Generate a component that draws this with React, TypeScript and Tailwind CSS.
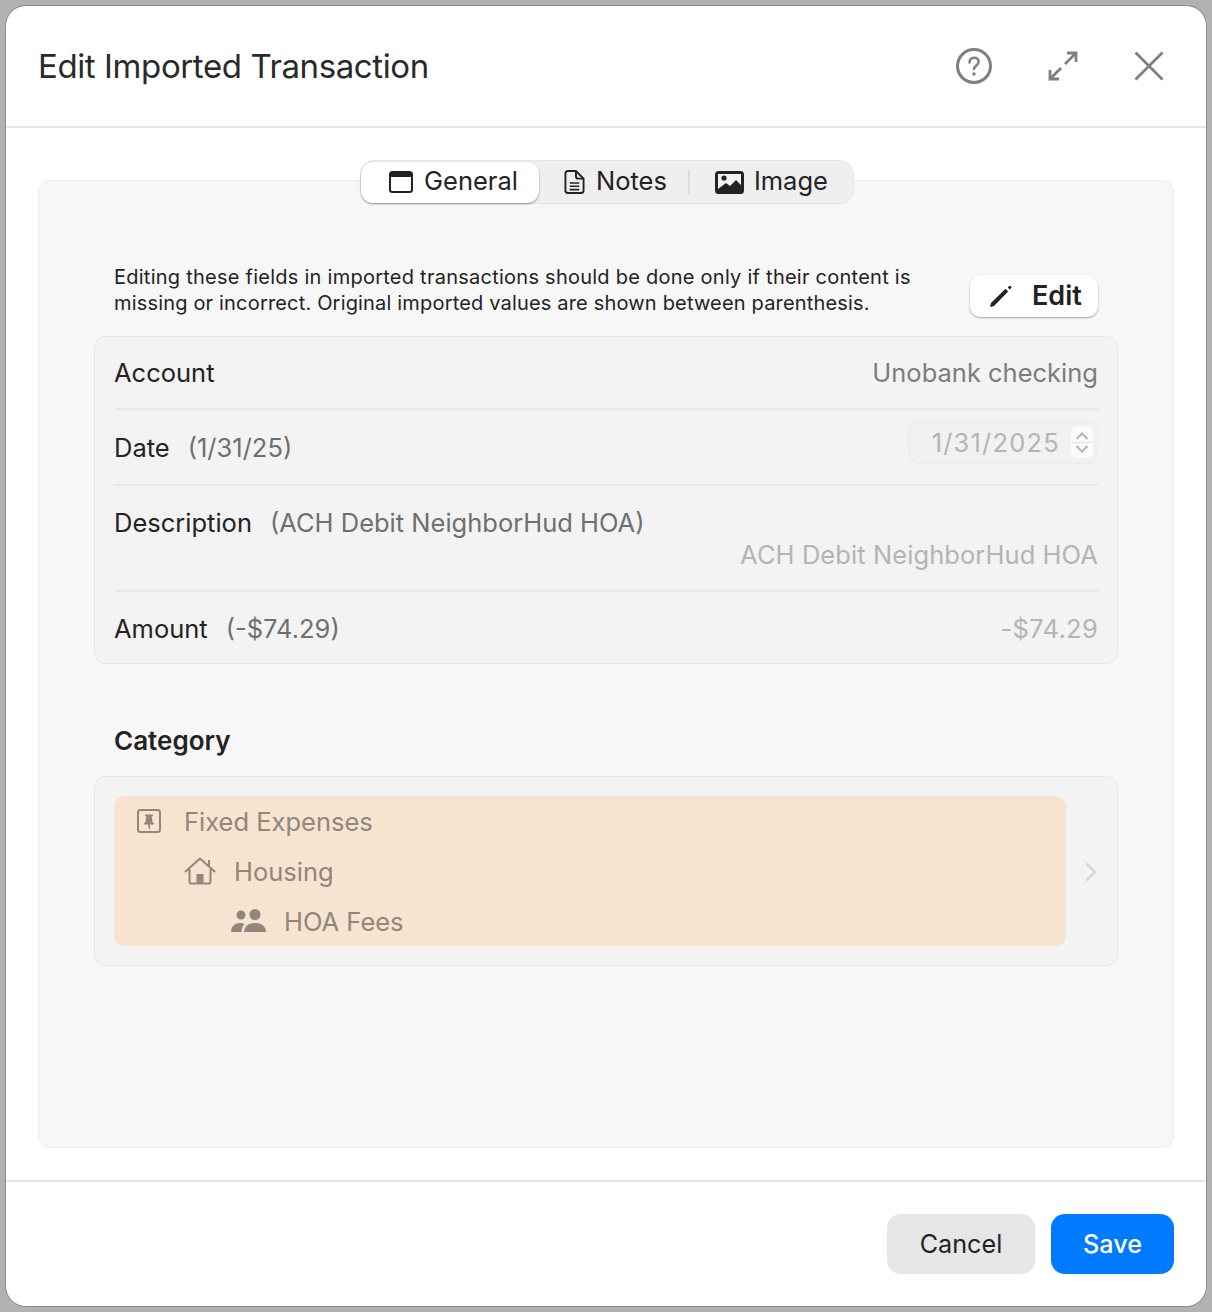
const font = { fontFamily: "Inter, 'Noto Sans', sans-serif" };

function CalendarWindowIcon() {
  return (
    <svg width="24" height="22" viewBox="0 0 24 22" fill="none">
      <rect x="1" y="1" width="22" height="20" rx="2.500" stroke="#232323" strokeWidth="2" />
      <path d="M1 3.500A2.500 2.500 0 0 1 3.500 1h17A2.500 2.500 0 0 1 23 3.500V6H1z" fill="#232323" />
    </svg>
  );
}

function NoteIcon() {
  return (
    <svg width="21" height="26" viewBox="0 0 22 26" fill="none" stroke="#232323" strokeWidth="2">
      <path d="M4 1.500h8.500l8 8V22a2.500 2.500 0 0 1-2.500 2.500H4A2.500 2.500 0 0 1 1.500 22V4A2.500 2.500 0 0 1 4 1.500z" strokeLinejoin="round" />
      <path d="M12.500 1.500V7a2.500 2.500 0 0 0 2.500 2.500h5.500" />
      <path d="M6 14h10M6 17.500h10M6 21h10" strokeWidth="1.600" />
    </svg>
  );
}

function PhotoIcon() {
  return (
    <svg width="29" height="23" viewBox="0 0 29 23">
      <rect x="1" y="1" width="27" height="21" rx="2.500" fill="#232323" stroke="#232323" strokeWidth="2" />
      <path d="M3 3h23v11l-5-5-6 6-4-3-8 6z" fill="#f3f3f3" />
      <circle cx="9" cy="7" r="2.600" fill="#232323" />
    </svg>
  );
}

function PencilIcon() {
  return (
    <svg width="24" height="24" viewBox="0 0 24 24" fill="#232323">
      <path d="M1 23l1-4L16.500 4.800l2.700 2.700L5 22z" />
      <path d="M20 2.300a1.400 1.400 0 0 1 2 0 1.400 1.400 0 0 1 0 2l-1.300 1.300-2-2z" />
    </svg>
  );
}

function HouseIcon() {
  return (
    <svg width="32" height="28" viewBox="0 0 32 28" fill="none" stroke="#918679" strokeWidth="2">
      <path d="M1.500 14.500L16 1.500l14.500 13" strokeLinecap="round" strokeLinejoin="round" />
      <path d="M5.500 12v12.500a2 2 0 0 0 2 2h17a2 2 0 0 0 2-2V12" />
      <path d="M25 3v6" />
      <rect x="12.500" y="17" width="7" height="9.500" fill="#918679" stroke="none" />
    </svg>
  );
}

function PeopleIcon() {
  return (
    <svg width="36" height="24" viewBox="0 0 36 24" fill="#918679">
      <circle cx="10" cy="6" r="4.500" />
      <circle cx="24" cy="5.500" r="5.500" />
      <path d="M0 23c0-5 3-9 9-9 2 0 3.500.5 4.500 1.300C11.500 17 10.500 20 10.500 23z" />
      <path d="M13 23c0-5 4-9 11-9s11 4 11 9z" />
    </svg>
  );
}

function PinBoxIcon() {
  return (
    <svg width="24" height="24" viewBox="0 0 24 24" fill="none">
      <rect x="1" y="1" width="22" height="22" rx="2.500" stroke="#918679" strokeWidth="2" />
      <path d="M8 5.500h8v1.500l-1.300.6.8 5.400 1.500 1.500v1H13v4l-1 1-1-5H7v-1l1.500-1.500.8-5.400L8 7z" fill="#918679" />
    </svg>
  );
}

function Divider() {
  return <div className="h-[2px] bg-[#e8e8e8]" />;
}

export default function App() {
  return (
    <div className="w-[1212px] h-[1312px] bg-[#b1b1b1] p-[6px] overflow-hidden" style={font}>
      <div className="h-[1300px] rounded-[20px] bg-white flex flex-col shadow-[0_0_0_1px_#8c8c8c] text-[#232323]">
        <header className="h-[122px] shrink-0 flex items-center justify-between pl-[32px] pr-[42px] border-b-2 border-[#e6e6e6]">
          <h1 className="text-[33px] leading-none font-normal tracking-[-0.4px] text-[#2a2a2a]">Edit Imported Transaction</h1>
          <div className="flex items-center">
            <svg width="36" height="36" viewBox="0 0 36 36" fill="none" stroke="#7f7f7f" strokeWidth="3">
              <circle cx="18" cy="18" r="16.500" />
              <path d="M13.500 14.500c0-3 2-4.700 4.700-4.700 2.700 0 4.500 1.700 4.500 4 0 3.500-4.700 3.700-4.700 7.200" strokeWidth="2.500" strokeLinecap="round" />
              <circle cx="18" cy="26" r="1.700" fill="#7f7f7f" stroke="none" />
            </svg>
            <svg className="ml-[56px]" width="30" height="30" viewBox="0 0 30 30" fill="none" stroke="#7f7f7f" strokeWidth="2.800">
              <path d="M2 28l11-11M17 13L28 2M19 2h9v9M2 19v9h9" />
            </svg>
            <svg className="ml-[56px]" width="30" height="30" viewBox="0 0 30 30" fill="none" stroke="#7f7f7f" strokeWidth="2.800">
              <path d="M1.500 1.500l27 27M28.500 1.500l-27 27" />
            </svg>
          </div>
        </header>

        <main className="flex-1 px-[32px] pt-[52px] pb-[32px]">
          <div className="h-[968px] rounded-[12px] border border-[#ececec] bg-[#f7f7f7] flex flex-col">
            <div className="flex justify-center -mt-[21px]">
              <div className="ml-[2px] w-[494px] h-[44px] rounded-[14px] bg-[#efefef] border border-[#e6e6e6] flex items-center text-[25.500px] text-[#232323]">
                <div className="w-[178px] h-[41px] rounded-[12px] bg-white shadow-[0_1px_2px_rgba(0,0,0,0.4)] flex items-center pl-[28px] gap-[11px]">
                  <CalendarWindowIcon />
                  <span className="pb-[2px]">General</span>
                </div>
                <div className="flex items-center gap-[11px] ml-[25px]">
                  <NoteIcon />
                  <span className="pb-[2px]">Notes</span>
                </div>
                <div className="w-[2px] h-[24px] bg-[#dcdcdc] ml-[21px]" />
                <div className="flex items-center gap-[10px] ml-[25px]">
                  <PhotoIcon />
                  <span className="pb-[2px]">Image</span>
                </div>
              </div>
            </div>

            <div className="px-[55px] pt-[70px]">
              <div className="flex items-center justify-between pl-[20px] pr-[20px] h-[44px]">
                <p className="mb-[12px] text-[20px] leading-[26px] text-[#232323] tracking-[0.25px] whitespace-nowrap">
                  Editing these fields in imported transactions should be done only if their content is
                  <br />
                  <span className="tracking-[0.175px]">missing or incorrect. Original imported values are shown between parenthesis.</span>
                </p>
                <button className="w-[128px] h-[42px] rounded-[11px] bg-white shadow-[0_1px_2px_rgba(0,0,0,0.35)] flex items-center pl-[19px] gap-[19px] text-[27px] font-semibold">
                  <PencilIcon />
                  <span>Edit</span>
                </button>
              </div>

              <div className="mt-[18px] h-[328px] rounded-[12px] border border-[#e6e6e6] bg-[#f3f3f3] px-[19px] flex flex-col text-[25.500px] text-[#232323]">
                <div className="h-[71px] pt-[2px] flex items-center justify-between">
                  <span>Account</span>
                  <span className="text-[#7c7c7c]">Unobank checking</span>
                </div>
                <Divider />
                <div className="h-[74px] flex justify-between">
                  <div className="pt-[22px] leading-[32px]">
                    Date<span className="ml-[18px] text-[#6f6f6f]">(1/31/25)</span>
                  </div>
                  <div className="mt-[10px] w-[190px] h-[44px] rounded-[12px] border border-[#ebebeb] bg-[#f1f1f1] flex items-center justify-end pr-[4px] text-[#b4b4b4]">
                    <span className="mr-[11px] pt-[2px] tracking-[1.200px]">1/31/2025</span>
                    <div className="w-[22px] h-[32px] rounded-[6px] bg-[#fbfbfb] flex flex-col items-center justify-center gap-[2px]">
                      <svg width="14" height="8" viewBox="0 0 14 8" fill="none" stroke="#b4b4b4" strokeWidth="2"><path d="M1.500 7L7 1.500 12.500 7" /></svg>
                      <div className="w-full h-px bg-[#e4e4e4]" />
                      <svg width="14" height="8" viewBox="0 0 14 8" fill="none" stroke="#b4b4b4" strokeWidth="2"><path d="M1.500 1L7 6.500 12.500 1" /></svg>
                    </div>
                  </div>
                </div>
                <Divider />
                <div className="h-[104px] flex flex-col pt-[21px] leading-[32px]">
                  <div>
                    Description<span className="ml-[18px] text-[#6f6f6f]">(ACH Debit NeighborHud HOA)</span>
                  </div>
                  <div className="text-right text-[#b4b4b4] tracking-[0.08px]">ACH Debit NeighborHud HOA</div>
                </div>
                <Divider />
                <div className="flex-1 pt-[2px] flex items-center justify-between leading-[32px]">
                  <div>
                    Amount<span className="ml-[18px] text-[#6f6f6f]">(-$74.29)</span>
                  </div>
                  <span className="text-[#b4b4b4] tracking-[0.3px]">-$74.29</span>
                </div>
              </div>

              <h2 className="mt-[61px] pl-[20px] text-[26px] leading-[32px] font-semibold text-[#232323]">Category</h2>

              <div className="mt-[19px] h-[190px] rounded-[12px] border border-[#e6e6e6] bg-[#f3f3f3] p-[19px] flex items-center">
                <div className="w-[952px] h-[150px] rounded-[10px] bg-[#f6e3d0] text-[25.500px] text-[#918679] flex flex-col">
                  <div className="h-[50px] flex items-center pl-[23px] gap-[23px]">
                    <PinBoxIcon />
                    <span className="pt-[2px]">Fixed Expenses</span>
                  </div>
                  <div className="h-[50px] flex items-center pl-[70px] gap-[18px]">
                    <HouseIcon />
                    <span className="pt-[2px]">Housing</span>
                  </div>
                  <div className="h-[50px] flex items-center pl-[117px] gap-[17px]">
                    <PeopleIcon />
                    <span className="pt-[2px]">HOA Fees</span>
                  </div>
                </div>
                <svg className="ml-[19px] mt-[2px]" width="12" height="20" viewBox="0 0 12 20" fill="none" stroke="#d6d6d6" strokeWidth="2.500">
                  <path d="M1.500 1.500L10 10l-8.500 8.500" />
                </svg>
              </div>
            </div>
          </div>
        </main>

        <footer className="flex-1 border-t-2 border-[#e6e6e6] flex items-start justify-end gap-[16px] pr-[32px] pt-[32px] text-[25.200px]">
          <button className="w-[148px] h-[60px] pt-[1px] rounded-[14px] bg-[#e6e6e6] text-[#232323]">Cancel</button>
          <button className="w-[123px] h-[60px] pt-[1px] rounded-[14px] bg-[#007aff] text-white font-medium">Save</button>
        </footer>
      </div>
    </div>
  );
}
